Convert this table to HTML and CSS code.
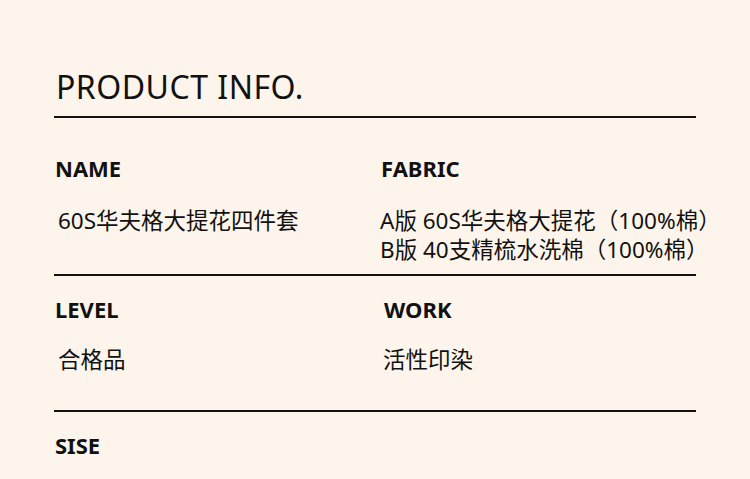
FILE: index.html
```html
<!DOCTYPE html>
<html lang="zh-CN">
<head>
<meta charset="utf-8">
<title>Product Info</title>
<link rel="stylesheet" href="styles.css">
</head>
<body>
<main class="sheet">
  <h1 class="title">PRODUCT INFO.</h1>
  <div class="rule"></div>
  <section class="row row-first">
    <div class="cell">
      <h2 class="label">NAME</h2>
      <p class="value">60S华夫格大提花四件套</p>
    </div>
    <div class="cell">
      <h2 class="label">FABRIC</h2>
      <p class="value">A版 60S华夫格大提花（100%棉）<br>B版 40支精梳水洗棉（100%棉）</p>
    </div>
  </section>
  <div class="rule"></div>
  <section class="row row-second">
    <div class="cell">
      <h2 class="label">LEVEL</h2>
      <p class="value">合格品</p>
    </div>
    <div class="cell">
      <h2 class="label">WORK</h2>
      <p class="value">活性印染</p>
    </div>
  </section>
  <div class="rule"></div>
  <section class="row row-third">
    <div class="cell">
      <h2 class="label">SISE</h2>
    </div>
  </section>
</main>
</body>
</html>
```

FILE: styles.css
```css
html, body {
  margin: 0;
  padding: 0;
}
body {
  background: #fdf5eb;
  color: #111;
  font-family: "Noto Sans", "Noto Sans CJK SC", sans-serif;
  width: 750px;
  height: 479px;
  overflow: hidden;
}
.sheet {
  padding: 0 54px;
  width: 642px;
}
.title {
  margin: 67px 0 0 2px;
  font-size: 32px;
  font-weight: 400;
  line-height: 40px;
  letter-spacing: 0.5px;
}
.rule {
  height: 2px;
  background: #111;
  margin-top: 9px;
}
.row {
  display: grid;
  grid-template-columns: 326px 1fr;
}
.row-first {
  padding: 38px 0 10px;
}
.row-second {
  grid-template-columns: 329px 1fr;
  padding: 21px 0 36px;
}
.row-third {
  padding: 21px 0 0;
}
.row + .rule {
  margin-top: 0;
}
.label {
  margin: 0 0 0 1px;
  font-size: 22px;
  font-weight: 700;
  line-height: 24px;
}
.value {
  margin: 26px 0 0 4px;
  font-size: 22.5px;
  font-weight: 400;
  line-height: 29px;
  white-space: nowrap;
}
.row-first .cell:last-child .value {
  margin-left: 0;
}
.row-second .value {
  margin-top: 24px;
}
.row-second .cell:last-child .value {
  margin-left: 0;
}
```
